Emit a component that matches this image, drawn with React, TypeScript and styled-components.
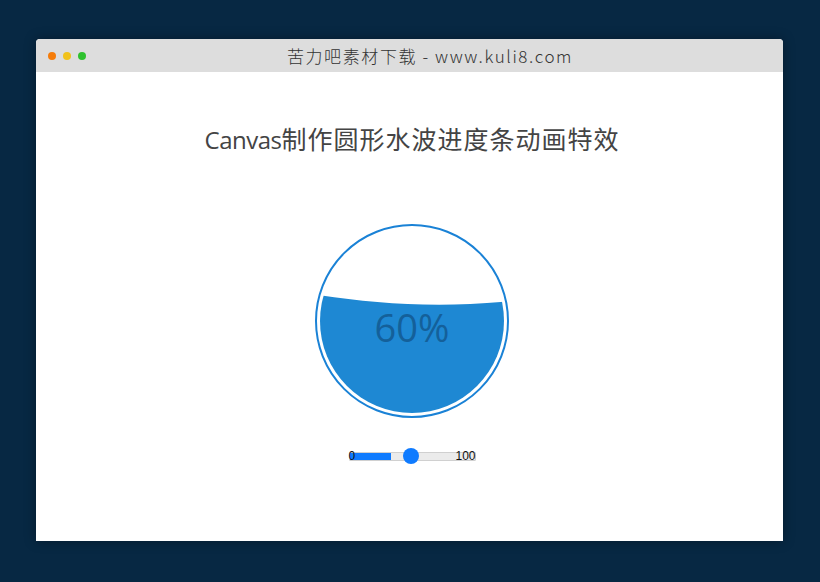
import React from "react";
import styled, { createGlobalStyle } from "styled-components";

const Global = createGlobalStyle`
  html, body { margin: 0; padding: 0; }
  body {
    background: #072843;
    width: 820px;
    height: 582px;
    overflow: hidden;
    font-family: "Noto Sans CJK SC", "Noto Sans", sans-serif;
  }
`;

const Page = styled.div`
  padding: 39px 0 0 36px;
`;

const Window = styled.div`
  width: 747px;
  height: 502px;
  background: #ffffff;
  border-radius: 4px 4px 0 0;
  box-shadow: 0 0 12px rgba(0, 0, 0, 0.35);
  display: flex;
  flex-direction: column;
  overflow: hidden;
`;

const TitleBar = styled.div`
  height: 33px;
  background: #dddddd;
  display: flex;
  align-items: center;
  flex-shrink: 0;
`;

const Dots = styled.div`
  display: flex;
  gap: 7px;
  padding-left: 12px;
`;

const Dot = styled.span<{ $c: string }>`
  width: 8px;
  height: 8px;
  border-radius: 50%;
  background: ${(p) => p.$c};
`;

const TitleText = styled.div`
  flex: 1;
  text-align: center;
  font-size: 17px;
  font-weight: 300;
  color: #333;
  margin-right: 9px;
  letter-spacing: 1.6px;
`;

const Content = styled.div`
  display: flex;
  flex-direction: column;
  align-items: center;
  padding-left: 5px;
`;

const Heading = styled.h1`
  margin: 51px 0 0;
  height: 30px;
  font-size: 24px;
  line-height: 30px;
  font-weight: 400;
  color: #444;
  font-family: "Open Sans", "Noto Sans CJK SC", sans-serif;
  display: flex;
  align-items: baseline;
`;

const Latin = styled.span`
  letter-spacing: -0.5px;
`;

const Cjk = styled.span`
  font-family: "Noto Sans CJK SC", sans-serif;
  font-size: 25px;
  letter-spacing: 1px;
`;

const Gauge = styled.svg`
  display: block;
  margin-top: 68px;
`;

const SliderWrap = styled.div`
  position: relative;
  width: 127px;
  height: 16px;
  margin-top: 27px;
  display: flex;
  align-items: center;
`;

const Track = styled.div`
  flex: 1;
  height: 7px;
  background: #ebebeb;
  border: 1px solid #d0d0d0;
  border-radius: 1px;
  display: flex;
  overflow: hidden;
`;

const Fill = styled.div`
  height: 100%;
  background: #0f7bff;
`;

const Thumb = styled.div`
  position: absolute;
  top: 0;
  width: 16px;
  height: 16px;
  margin-left: -8px;
  border-radius: 50%;
  background: #0f7bff;
`;

const Label = styled.span<{ $side: "left" | "right" }>`
  position: absolute;
  top: 1px;
  ${(p) => (p.$side === "left" ? "left: 0;" : "right: 0;")}
  font-family: "Liberation Sans", Arial, sans-serif;
  font-size: 12px;
  line-height: 14px;
  color: #111;
`;

const GaugeText = styled.text`
  font-family: "Open Sans", "Noto Sans", sans-serif;
  font-size: 38px;
  fill: #14609a;
`;

export default function App() {
  const fillPct = 33;
  const thumbPct = 49;
  return (
    <>
      <Global />
      <Page>
        <Window>
          <TitleBar>
            <Dots>
              <Dot $c="#f57c0a" />
              <Dot $c="#f1c21b" />
              <Dot $c="#2ec12e" />
            </Dots>
            <TitleText>苦力吧素材下载 - www.kuli8.com</TitleText>
          </TitleBar>
          <Content>
            <Heading>
              <Latin>Canvas</Latin>
              <Cjk>制作圆形水波进度条动画特效</Cjk>
            </Heading>
            <Gauge width="200" height="200" viewBox="0 0 200 200">
              <defs>
                <clipPath id="inner">
                  <circle cx="100" cy="100" r="92" />
                </clipPath>
              </defs>
              <circle cx="100" cy="100" r="96" fill="none" stroke="#1a82d6" strokeWidth="2" />
              <path
                clipPath="url(#inner)"
                d="M0,73 C60,82 120,88 200,80 L200,200 L0,200 Z"
                fill="#1e88d3"
              />
              <GaugeText x="100" y="121" textAnchor="middle">60%</GaugeText>
            </Gauge>
            <SliderWrap>
              <Track>
                <Fill style={{ width: `${fillPct}%` }} />
              </Track>
              <Thumb style={{ left: `${thumbPct}%` }} />
              <Label $side="left">0</Label>
              <Label $side="right">100</Label>
            </SliderWrap>
          </Content>
        </Window>
      </Page>
    </>
  );
}
